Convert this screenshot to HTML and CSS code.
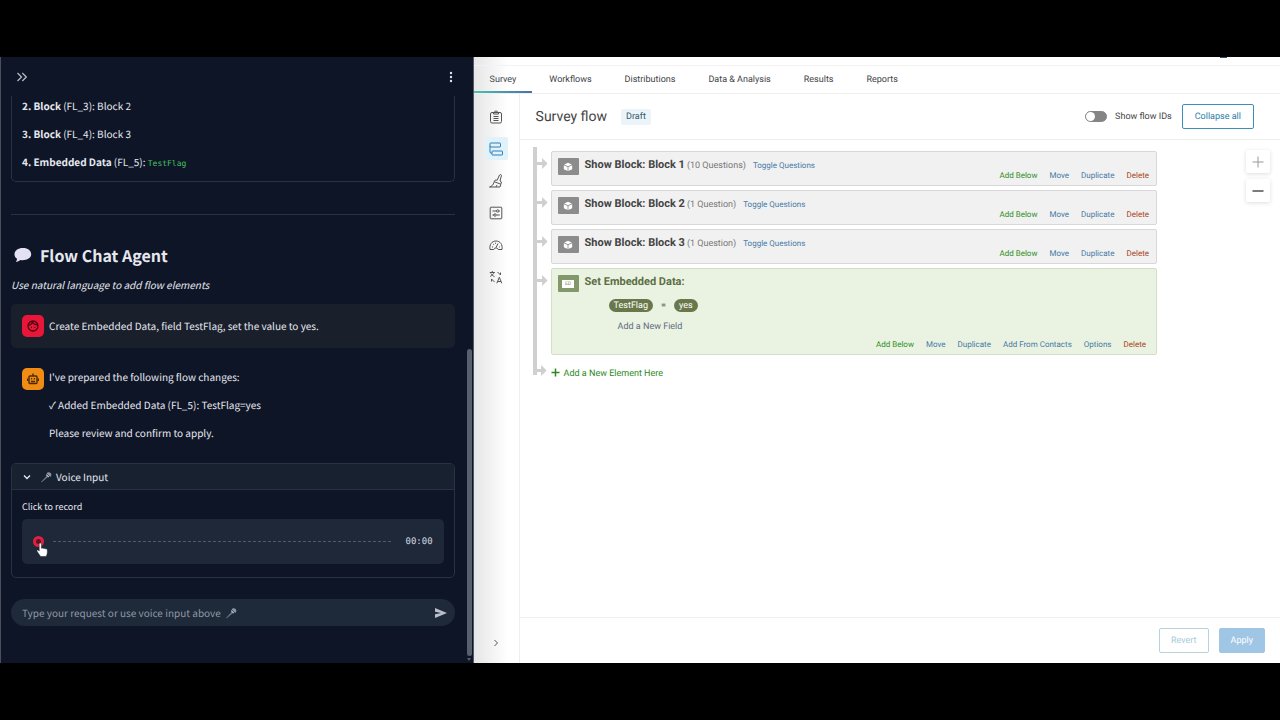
FILE: index.html
```
<!DOCTYPE html>
<html lang="en">
<head>
    <meta charset="UTF-8" />
    <meta name="viewport" content="width=device-width, initial-scale=1.0" />
    <title>Survey flow</title>
    <link rel="stylesheet" href="styles.css">
</head>
<body>
    <!-- shared icons -->
    <svg class="sprite" aria-hidden="true">
        <symbol id="cube" viewBox="0 0 12 12">
            <path fill="#fff" d="M6 1 10.6 3 6 5.2 1.4 3zM1 3.8l4.5 2.1v5L1 8.8zM11 3.8v5l-4.5 2.1v-5z" />
        </symbol>
        <symbol id="mic" viewBox="0 0 12 12">
            <path d="M1 11 7 4.500 8.300 5.800 1.800 11.300z" fill="#707887" />
            <path d="M6.200 3.600 8.800 6.200" stroke="#c0c5cf" stroke-width="1.200" />
            <path d="M6.600 2.400A2.600 2.600 0 1 1 10.200 6z" fill="#8c93a1" />
        </symbol>
    </svg>

    <div class="app">
        <aside class="chat-panel">
            <div class="chat-header">
                <button class="icon-button" aria-label="Close panel">
                    <svg width="12" height="12" viewBox="0 0 12 12" fill="none" stroke="#b4b9c4" stroke-width="1.300"><path d="M1.500 2 5.500 6l-4 4M6.300 2l4 4-4 4" /></svg>
                </button>
                <button class="icon-button" aria-label="Menu">
                    <svg width="12" height="12" viewBox="0 0 12 12" fill="#e0e3ea"><circle cx="6" cy="2" r="1.200" /><circle cx="6" cy="6" r="1.200" /><circle cx="6" cy="10" r="1.200" /></svg>
                </button>
            </div>

            <div class="flow-list">
                <p><b>2. Block</b> (FL_3): Block 2</p>
                <p><b>3. Block</b> (FL_4): Block 3</p>
                <p><b>4. Embedded Data</b> (FL_5): <code>TestFlag</code></p>
            </div>
            <hr>

            <h2 class="chat-title">
                <svg width="20" height="18" viewBox="0 0 20 18"><path fill="#e3e1f2" d="M10 2C5 2 1.500 4.700 1.500 8.200c0 2 1 3.500 2.600 4.600-.1 1.200-.6 2.200-1.300 3 1.800-.1 3.300-.7 4.400-1.800 5.800.9 11-1.600 11-5.800C18.200 4.700 15 2 10 2z" /></svg>
                Flow Chat Agent
            </h2>
            <p class="chat-caption">Use natural language to add flow elements</p>

            <div class="message user">
                <div class="avatar">
                    <svg width="14" height="14" viewBox="0 0 14 14" fill="none" stroke="#4d0712" stroke-width="1.300"><circle cx="7" cy="7" r="5" /><path d="M2.300 6.300C4.500 6.200 5.800 5 6.300 3.200 7.500 5 9.300 5.900 11.700 5.600" /><path d="M5 8.300h1M8.300 8.300h1" /></svg>
                </div>
                <div class="message-text">
                    <p>Create Embedded Data, field TestFlag, set the value to yes.</p>
                </div>
            </div>
            <div class="message assistant">
                <div class="avatar">
                    <svg width="14" height="14" viewBox="0 0 14 14" fill="none" stroke="#4a2a05" stroke-width="1.400"><rect x="3" y="4" width="8" height="7.500" rx="1" /><path d="M7 4V1.500M1.700 6.500v2.500M12.300 6.500v2.500M5 9.500h4" /><path d="M5 6.800h1.200M7.800 6.800H9" /></svg>
                </div>
                <div class="message-text">
                    <p>I've prepared the following flow changes:</p>
                    <p>✓ Added Embedded Data (FL_5): TestFlag=yes</p>
                    <p>Please review and confirm to apply.</p>
                </div>
            </div>

            <div class="expander">
                <button class="expander-header">
                    <svg width="8" height="8" viewBox="0 0 8 8" fill="none" stroke="#e8eaf0" stroke-width="1.300"><path d="M1 2.500 4 5.500l3-3" /></svg>
                    <svg class="mic" width="12" height="12"><use href="#mic" /></svg>
                    Voice Input
                </button>
                <div class="expander-body">
                    <span class="record-label">Click to record</span>
                    <div class="recorder">
                        <button class="record-button" aria-label="Record">
                            <svg class="cursor" width="14" height="16" viewBox="0 0 14 16"><path fill="#fff" stroke="#1b2230" stroke-width=".5" d="M4.200 1c.8 0 1.200.5 1.200 1.300v4c.4-.5 1.500-.5 1.900.2.600-.4 1.500-.2 1.900.4 1-.3 2 .2 2.100 1.300.2 2.500 0 4-1.200 6.300H4.600C3.300 12.500 2 10.800 1 9.200c-.5-.8.5-1.600 1.300-1L3.200 9V2.300C3.200 1.500 3.500 1 4.200 1z" /></svg>
                        </button>
                        <span class="wave"></span>
                        <span class="timer">00:00</span>
                    </div>
                </div>
            </div>

            <div class="chat-input">
                <label class="prompt">
                    <input type="text" aria-label="Request" placeholder="Type your request or use voice input above">
                    <svg class="mic" width="12" height="12"><use href="#mic" /></svg>
                </label>
                <button class="icon-button" aria-label="Send">
                    <svg width="14" height="12" viewBox="0 0 14 12"><path fill="#b9bfcc" d="M1 1l12 5L1 11V7.300L7 6 1 4.700z" /></svg>
                </button>
            </div>

            <div class="scrollbar"><span></span></div>
        </aside>

        <main class="survey">
            <div class="top-strip"><span class="account"></span></div>
            <nav class="tabs">
                <a href="#" class="active">Survey</a>
                <a href="#">Workflows</a>
                <a href="#">Distributions</a>
                <a href="#">Data &amp; Analysis</a>
                <a href="#">Results</a>
                <a href="#">Reports</a>
            </nav>

            <div class="workspace">
                <nav class="tool-bar">
                    <a href="#" aria-label="Builder"><svg viewBox="0 0 14 14"><rect x="1.500" y="2.500" width="11" height="10.500" rx="1.500" /><path d="M4.500 4V2.500L7 .8l2.500 1.700V4zM4.500 6.500h5M4.500 8.500h5M4.500 10.500h5" /></svg></a>
                    <a href="#" class="active" aria-label="Survey flow"><svg viewBox="0 0 14 14"><rect x="1" y="1" width="10.500" height="4" rx=".5" /><rect x="3" y="9" width="10.500" height="4" rx=".5" /><path d="M1 4v6.500l2 1" /></svg></a>
                    <a href="#" aria-label="Look and feel"><svg viewBox="0 0 14 14"><path d="M.5 13c2-.2 3.800-2 4.700-5.300l6.600 2.500L11 13zM5.200 7.700l1-1.700 2 .2L10.500 1c.5-1 2.200-.5 1.900.7L11 7l1.500 1-.7 2.200M7 13l1-2" /></svg></a>
                    <a href="#" aria-label="Survey options"><svg viewBox="0 0 14 14"><rect x="1.200" y="1.200" width="11.600" height="11.600" rx=".8" /><path d="M3.500 5h4M10 5h.8M3.500 9H5M7.500 9h3.300" /><circle cx="8.700" cy="5" r="1.200" /><circle cx="6" cy="9" r="1.200" /></svg></a>
                    <a href="#" aria-label="Quotas"><svg viewBox="0 0 14 14"><path d="M1 11.500C.2 6.500 2.800 3 7 3s6.800 3.500 6 8.500H9.200a2.300 2.300 0 0 0-4.400 0zM7 9.500 9 5.500M3 9h1M4 6l.8.6M6.500 4.700v1M10.200 9H11" /></svg></a>
                    <a href="#" aria-label="Translations"><svg viewBox="0 0 14 14"><path d="M.8 2.500h5M3.300 1v1.500M1.200 6.500C3 5.500 4.500 4 4.800 2.500M1.800 3.500C2.500 5 4 6 5.500 6.500M8.500 2l3 3M11.500 2.500V5M5.500 12l-3-3M2.500 11.500V9M7.800 13.300l2.500-6 2.500 6M8.600 11.500H12" /></svg></a>
                    <button class="icon-button expand" aria-label="Expand"><svg viewBox="0 0 14 14"><path d="M5.500 4 8.500 7l-3 3" /></svg></button>
                </nav>

                <section class="content">
                    <header class="flow-header">
                        <h1>Survey flow</h1>
                        <span class="tag">Draft</span>
                        <label class="toggle"><input type="checkbox"><span>Show flow IDs</span></label>
                        <button class="outline-button">Collapse all</button>
                    </header>

                    <div class="canvas">
                        <ul class="flow">
                            <li class="block">
                                <span class="block-icon"><svg width="10" height="10"><use href="#cube" /></svg></span>
                                <div class="block-body">
                                    <div class="block-title"><b>Show Block: Block 1</b> <small>(10 Questions)</small> <a href="#">Toggle Questions</a></div>
                                    <div class="actions"><a href="#" class="add">Add Below</a><a href="#">Move</a><a href="#">Duplicate</a><a href="#" class="delete">Delete</a></div>
                                </div>
                            </li>
                            <li class="block">
                                <span class="block-icon"><svg width="10" height="10"><use href="#cube" /></svg></span>
                                <div class="block-body">
                                    <div class="block-title"><b>Show Block: Block 2</b> <small>(1 Question)</small> <a href="#">Toggle Questions</a></div>
                                    <div class="actions"><a href="#" class="add">Add Below</a><a href="#">Move</a><a href="#">Duplicate</a><a href="#" class="delete">Delete</a></div>
                                </div>
                            </li>
                            <li class="block">
                                <span class="block-icon"><svg width="10" height="10"><use href="#cube" /></svg></span>
                                <div class="block-body">
                                    <div class="block-title"><b>Show Block: Block 3</b> <small>(1 Question)</small> <a href="#">Toggle Questions</a></div>
                                    <div class="actions"><a href="#" class="add">Add Below</a><a href="#">Move</a><a href="#">Duplicate</a><a href="#" class="delete">Delete</a></div>
                                </div>
                            </li>
                            <li class="block embedded">
                                <span class="block-icon"><span class="ed">ED</span></span>
                                <div class="block-body">
                                    <div class="block-title"><b>Set Embedded Data:</b></div>
                                    <div class="field"><button class="pill">TestFlag</button><span>=</span><button class="pill">yes</button></div>
                                    <a href="#" class="add-field">Add a New Field</a>
                                    <div class="actions"><a href="#" class="add">Add Below</a><a href="#">Move</a><a href="#">Duplicate</a><a href="#">Add From Contacts</a><a href="#">Options</a><a href="#" class="delete">Delete</a></div>
                                </div>
                            </li>
                            <li class="add-element">
                                <a href="#"><svg width="9" height="9" viewBox="0 0 9 9" stroke="#2c8a1c" stroke-width="1.500"><path d="M4.500 .5v8M.5 4.500h8" /></svg>Add a New Element Here</a>
                            </li>
                        </ul>
                        <div class="zoom">
                            <button aria-label="Zoom in"><svg width="12" height="12" viewBox="0 0 12 12" stroke="#999"><path d="M6 .5v11M.5 6h11" /></svg></button>
                            <button aria-label="Zoom out"><svg width="12" height="12" viewBox="0 0 12 12" stroke="#333" stroke-width="1.300"><path d="M.5 6h11" /></svg></button>
                        </div>
                    </div>

                    <footer class="flow-footer">
                        <button class="revert" disabled>Revert</button>
                        <button class="apply" disabled>Apply</button>
                    </footer>
                </section>
            </div>
        </main>
    </div>
</body>
</html>
```
FILE: styles.css
```
* {
    box-sizing: border-box;
}

body {
    display: flex;
    min-height: 100vh;
    margin: 0;
    padding: 57px 0;
    background-color: #000;
    font-family: Roboto, "Liberation Sans", sans-serif;
    font-size: 9px;
    text-rendering: geometricPrecision;
}

p,
h1,
h2,
ul {
    margin: 0;
    padding: 0;
}

a {
    color: #4679a6;
    text-decoration: none;
}

button,
input {
    font: inherit;
    color: inherit;
    text-rendering: inherit;
}

button {
    padding: 0;
    border: none;
    background: none;
    cursor: pointer;
}

svg {
    display: block;
    flex: none;
}

.sprite {
    position: absolute;
    width: 0;
    height: 0;
}

.app {
    display: flex;
    flex: 1;
}

/* chat panel */
.chat-panel {
    position: relative;
    width: 37%;
    padding: 0 18px 36px 10px;
    border-left: 1px solid #4a4f59;
    border-right: 1px solid #555963;
    background-color: #0e1526;
    color: #e6e8f0;
    font-family: "Noto Sans CJK SC", sans-serif;
    font-size: 10px;
}

.chat-header {
    display: flex;
    justify-content: space-between;
    align-items: center;
    height: 39px;
    padding: 0 0 0 5px;
}

.chat-header .icon-button:last-child {
    margin-right: -2px;
}

.flow-list {
    display: flex;
    flex-direction: column;
    gap: 8px;
    padding: 0 10px 9px;
    border: 1px solid #2a3140;
    border-top: none;
    border-radius: 0 0 5px 5px;
    line-height: 20px;
}

.flow-list code {
    color: #46c260;
    font-family: "DejaVu Sans Mono", monospace;
    font-size: 8px;
    line-height: 1;
}

hr {
    margin: 32px 0 0;
    border: none;
    border-top: 1px solid #2a3140;
}

.chat-title {
    display: flex;
    align-items: center;
    gap: 7px;
    margin-top: 25px;
    padding-left: 2px;
    font-size: 16px;
    font-weight: 600;
    line-height: 30px;
}

.chat-caption {
    margin-top: 5px;
    font-style: italic;
    line-height: 20px;
}

.message {
    display: flex;
    gap: 5px;
    margin-top: 9px;
    padding: 11px;
    border-radius: 5px;
}

.message.user {
    align-items: center;
    background-color: #191f2b;
}

.message-text {
    display: flex;
    flex-direction: column;
    gap: 10px;
    line-height: 18px;
}

.avatar {
    display: flex;
    flex: none;
    justify-content: center;
    align-items: center;
    width: 22px;
    height: 22px;
    border-radius: 5px;
    background-color: #e9163a;
}

.assistant .avatar {
    background-color: #f08c14;
}

.expander {
    margin-top: 10px;
    border: 1px solid #2a3140;
    border-radius: 5px;
}

.expander-header {
    display: flex;
    align-items: center;
    gap: 4px;
    width: 100%;
    height: 26px;
    padding: 0 11px;
    border-bottom: 1px solid #2a3140;
    background-color: #182130;
}

.expander-header .mic {
    margin-left: 5px;
}

.expander-body {
    padding: 9px 10px 13px;
}

.record-label {
    display: block;
    font-size: 9px;
    line-height: 16px;
}

.recorder {
    display: flex;
    align-items: center;
    gap: 9px;
    height: 45px;
    margin-top: 4px;
    padding: 0 11px;
    border-radius: 5px;
    background-color: #1e2838;
}

.record-button {
    position: relative;
    width: 11px;
    height: 11px;
    border: 3px solid #e0203f;
    border-radius: 50%;
    background-color: #5e1227;
}

.cursor {
    position: absolute;
    left: 0;
    top: 3px;
}

.wave {
    flex: 1;
    height: 1px;
    background: repeating-linear-gradient(90deg, #4f596a 0 3px, transparent 3px 5px);
}

.timer {
    margin-left: 4px;
    color: #d5d9e3;
    font-family: "DejaVu Sans Mono", monospace;
    font-size: 9px;
}

.chat-input {
    display: flex;
    justify-content: space-between;
    align-items: center;
    height: 27px;
    margin-top: 21px;
    padding: 0 7px 0 11px;
    border-radius: 14px;
    background-color: #1e2939;
}

.prompt {
    display: flex;
    align-items: center;
    gap: 4px;
}

.prompt input {
    width: 200px;
    padding: 0;
    border: none;
    outline: none;
    background: none;
    field-sizing: content;
}

.prompt input:placeholder-shown {
    width: auto;
}

.prompt input::placeholder {
    color: #9098a6;
    opacity: 1;
}

/* sits over the right edge of the panel */
.scrollbar {
    position: absolute;
    right: 1px;
    bottom: 0;
    width: 5px;
    height: 314px;
}

.scrollbar span {
    display: block;
    height: 307px;
    border-radius: 3px;
    background-color: #59606d;
}

.scrollbar::after {
    content: "";
    display: block;
    width: 0;
    margin-top: 2px;
    border: 2px solid transparent;
    border-top: 3px solid #59606d;
}

/* survey side */
.survey {
    display: flex;
    flex: 1;
    flex-direction: column;
    background-color: #fff;
    background-image: linear-gradient(90deg, #e6e6e6, #fff 34px);
    color: #444;
}

.top-strip {
    height: 9px;
    padding-right: 53px;
    border-bottom: 1px solid #f2f2f2;
}

.account {
    display: block;
    width: 7px;
    height: 1px;
    margin-left: auto;
    background-color: #27566b;
}

.tabs {
    display: flex;
    gap: 1px;
    height: 28px;
    border-bottom: 1px solid #eee;
}

.tabs a {
    padding: 0 16px;
    color: #3f4448;
    line-height: 29px;
}

.tabs .active {
    border-bottom: 2px solid;
    border-image: linear-gradient(90deg, #4bc3ae, #4a6fa8) 1;
}

.workspace {
    display: flex;
    flex: 1;
}

.tool-bar {
    display: flex;
    flex-direction: column;
    align-items: center;
    gap: 9px;
    width: 46px;
    padding: 11px 0 13px;
    border-right: 1px solid #eee;
}

.tool-bar a,
.expand {
    display: flex;
    justify-content: center;
    align-items: center;
    width: 23px;
    height: 23px;
    border-radius: 2px;
}

.expand {
    height: 14px;
    margin-top: auto;
}

.tool-bar .active {
    background-color: #e2f2fa;
}

.tool-bar svg {
    width: 14px;
    height: 14px;
    fill: none;
    stroke: #555;
}

.tool-bar .active svg {
    stroke: #2f7fb8;
}

.content {
    display: flex;
    flex: 1;
    flex-direction: column;
    background-color: #fff;
}

.flow-header {
    display: flex;
    align-items: center;
    height: 46px;
    padding: 0 26px 0 16px;
    border-bottom: 1px solid #eee;
}

.flow-header h1 {
    font-size: 14px;
    font-weight: normal;
}

.tag {
    margin-left: 14px;
    padding: 0 5px;
    border-radius: 2px;
    background-color: #ebf5f9;
    color: #35586b;
    line-height: 16px;
}

.toggle {
    display: flex;
    align-items: center;
    gap: 8px;
    margin-left: auto;
}

.toggle input {
    display: flex;
    appearance: none;
    width: 22px;
    height: 11px;
    margin: 0;
    border: 1px solid #858585;
    border-radius: 6px;
    background-color: #858585;
}

.toggle input::before {
    content: "";
    width: 9px;
    height: 9px;
    border-radius: 50%;
    background-color: #fff;
}

.outline-button {
    height: 25px;
    margin-left: 10px;
    padding: 0 12px;
    border: 1px solid #3c8fb8;
    border-radius: 2px;
    color: #2b7da8;
}

.canvas {
    display: flex;
    flex: 1;
    align-items: flex-start;
    justify-content: space-between;
    padding: 7px 10px 0 13px;
}

.flow {
    position: relative;
    display: flex;
    flex: 1;
    flex-direction: column;
    gap: 4px;
    margin-right: 89px;
    padding: 4px 0 0 18px;
    list-style: none;
}

/* the line that joins the elements */
.flow::before {
    content: "";
    position: absolute;
    left: 0;
    top: 0;
    bottom: 5px;
    width: 4px;
    background-color: #d0d0d0;
}

.flow li {
    position: relative;
}

.flow li::before {
    content: "";
    position: absolute;
    left: -15px;
    top: 6px;
    width: 11px;
    height: 11px;
    background-color: #cfcfcf;
    clip-path: polygon(0 36%, 50% 36%, 50% 0, 100% 50%, 50% 100%, 50% 64%, 0 64%);
}

.block {
    display: flex;
    gap: 6px;
    padding: 6px 7px 4px 6px;
    border: 1px solid #d8d8d8;
    border-radius: 2px;
    background-color: #f1f1f1;
}

.block-icon {
    display: flex;
    justify-content: center;
    align-items: center;
    width: 21px;
    height: 17px;
    border-radius: 1px;
    background-color: #8c8c8c;
}

.block-body {
    display: flex;
    flex: 1;
    flex-direction: column;
    align-items: flex-start;
    padding-top: 1px;
}

.block-title {
    height: 12px;
    font-size: 8px;
    line-height: 12px;
}

.block-title b {
    font-size: 11px;
}

.block-title small {
    color: #777;
    font-size: 9px;
}

.block-title a {
    margin-left: 5px;
}

.actions {
    display: flex;
    gap: 12px;
    align-self: flex-end;
    font-size: 8px;
    line-height: 10px;
}

.actions .add {
    color: #2f8f1f;
}

.actions .delete {
    color: #a8421c;
}

.embedded {
    padding-right: 10px;
    border-color: #d3dfc6;
    background-color: #eaf3e1;
}

.embedded .block-icon {
    background-color: #83986a;
}

.embedded .block-title {
    color: #5c6e45;
}

.ed {
    padding: 0 3px;
    background-color: #fff;
    color: #7f9465;
    font-size: 5px;
    line-height: 8px;
}

.field {
    display: flex;
    align-items: center;
    gap: 8px;
    margin: 11px 0 0 24px;
}

.pill {
    height: 13px;
    padding: 0 5px;
    border-radius: 7px;
    background-color: #68784a;
    color: #fff;
    line-height: 14px;
}

.add-field {
    margin: 9px 0 7px 33px;
    color: #5f6b83;
    line-height: 12px;
}

.add-element {
    padding-top: 9px;
}

.add-element a {
    display: flex;
    gap: 4px;
    color: #2c8a1c;
    line-height: 12px;
}

.zoom {
    display: flex;
    flex-direction: column;
    gap: 6px;
    padding-top: 3px;
}

.zoom button {
    display: flex;
    justify-content: center;
    align-items: center;
    width: 24px;
    height: 23px;
    border-radius: 2px;
    box-shadow: 0 1px 4px #ddd;
}

.flow-footer {
    display: flex;
    justify-content: flex-end;
    align-items: center;
    gap: 10px;
    height: 46px;
    padding: 0 15px;
    border-top: 1px solid #eee;
}

.flow-footer button {
    height: 25px;
    padding: 0 11px;
    border: 1px solid #b6d3dc;
    border-radius: 2px;
    color: #a5cbdc;
}

.flow-footer .apply {
    border-color: #a0c6e6;
    background-color: #a0c6e6;
    color: #fff;
}
```
